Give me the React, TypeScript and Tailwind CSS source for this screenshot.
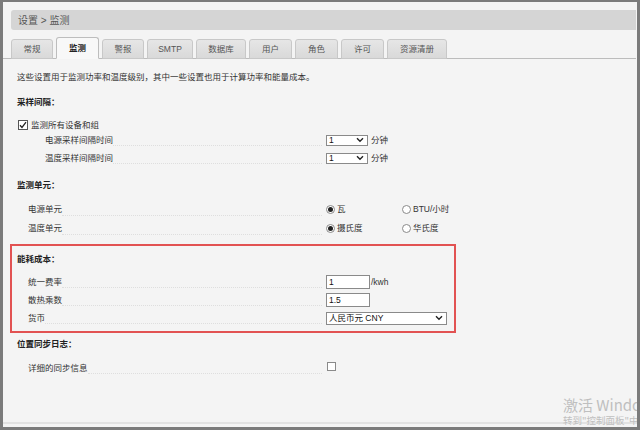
import React from "react";

function Chevron() {
  return (
    <svg width="8" height="6" viewBox="0 0 8 6" className="shrink-0">
      <path d="M1 1.2 L4 4.2 L7 1.2" fill="none" stroke="#222" strokeWidth="1.4" />
    </svg>
  );
}

function Select({ value, wide }: { value: string; wide?: boolean }) {
  return (
    <div
      className={
        wide
          ? "flex h-[13px] w-[121px] items-center justify-between border border-[#8a8a8a] bg-white pl-[2px] pr-[3px] leading-[11px]"
          : "flex h-[11px] w-[42px] items-center justify-between border border-[#8a8a8a] bg-white pl-[2px] pr-[3px] leading-[9px]"
      }
    >
      <span className="text-[#111]">{value}</span>
      <Chevron />
    </div>
  );
}

function TextInput({ value }: { value: string }) {
  return (
    <div className="flex h-[14px] w-[44px] items-center border border-[#8a8a8a] bg-white pl-[2px] leading-[12px] text-[#111]">
      {value}
    </div>
  );
}

function Radio({ checked, label }: { checked?: boolean; label: string }) {
  return (
    <div className="flex items-center gap-[2px]">
      <span className="flex h-[9px] w-[9px] items-center justify-center rounded-full border border-[#8a8a8a] bg-white">
        {checked ? <span className="h-[5px] w-[5px] rounded-full bg-[#222]" /> : null}
      </span>
      <span>{label}</span>
    </div>
  );
}

function Row({
  label,
  deep,
  tall,
  children,
}: {
  label: string;
  deep?: boolean;
  tall?: boolean;
  children?: React.ReactNode;
}) {
  return (
    <div className={tall ? "flex h-[19px] items-center" : "flex h-[18px] items-center"}>
      <div className="flex h-full w-[305px] shrink-0 items-center">
        <span className={deep ? "shrink-0 pl-[28px] text-[#333]" : "shrink-0 pl-[11px] text-[#333]"}>
          {label}
        </span>
        <span className="mb-[3px] flex-1 self-end border-b border-dotted border-[#dedede]" />
      </div>
      <div className="ml-[4px] flex items-center gap-[3px]">{children}</div>
    </div>
  );
}

const tabs = ["常规", "监测", "警报", "SMTP", "数据库", "用户", "角色", "许可", "资源清册"];
const tabW = ["w-[42px]", "w-[43px]", "w-[42px]", "w-[46px]", "w-[50px]", "w-[43px]", "w-[43px]", "w-[43px]", "w-[60px]"];

export default function App() {
  return (
    <div className="h-[430px] w-[640px] overflow-hidden bg-[#7b7b7b] pl-[3px] pr-[3px] pt-[2px] font-['Liberation_Sans','Noto_Sans_CJK_SC',sans-serif] text-[8.5px] text-[#333]">
      <div className="relative flex h-[425px] flex-col overflow-hidden bg-[#f4f4f4]">
        {/* breadcrumb */}
        <div className="ml-[8px] mr-[1px] mt-[8px] flex h-[20px] items-center rounded-l-[3px] bg-[#d5d5d5] pl-[7px] text-[10px] text-[#555]">
          设置 &gt; 监测
        </div>

        {/* tabs */}
        <div className="mr-[1px] mt-[8px] flex h-[21px] items-end gap-[3px] border-b border-[#bcbcbc] pl-[8px]">
          {tabs.map((t, i) =>
            i === 1 ? (
              <div
                key={t}
                className={`${tabW[i]} -mb-px flex h-[22px] items-center justify-center rounded-t-[3px] border border-[#bdbdbd] border-b-[#f8f8f8] bg-[#f8f8f8] font-bold text-[#222]`}
              >
                {t}
              </div>
            ) : (
              <div
                key={t}
                className={`${tabW[i]} -mb-px flex h-[20px] items-center justify-center rounded-t-[3px] border border-[#c8c8c8] bg-gradient-to-b from-[#e6e6e6] to-[#d9d9d9] text-[#555]`}
              >
                {t}
              </div>
            )
          )}
        </div>

        {/* content */}
        <div className="flex-1 pl-[7px]">
          <div className="mt-[12px] h-[12px] pl-[7px] leading-[12px]">
            这些设置用于监测功率和温度级别，其中一些设置也用于计算功率和能量成本。
          </div>

          <div className="pl-[7px]">
            <div className="mt-[13px] h-[12px] font-bold leading-[12px] text-[#222]">采样间隔：</div>
            <div className="mt-[11px] flex h-[12px] items-center gap-[3px] pl-[1px]">
              <span className="flex h-[10px] w-[10px] items-center justify-center border border-[#555] bg-white">
                <svg width="8" height="8" viewBox="0 0 8 8">
                  <path d="M1 4.2 L3 6.4 L7 1.2" fill="none" stroke="#222" strokeWidth="1.3" />
                </svg>
              </span>
              <span>监测所有设备和组</span>
            </div>
            <Row label="电源采样间隔时间" deep>
              <Select value="1" />
              <span>分钟</span>
            </Row>
            <Row label="温度采样间隔时间" deep>
              <Select value="1" />
              <span>分钟</span>
            </Row>

            <div className="mt-[12px] h-[12px] font-bold leading-[12px] text-[#222]">监测单元：</div>
            <div className="mt-[9px]">
              <Row label="电源单元" tall>
                <div className="w-[73px]">
                  <Radio checked label="瓦" />
                </div>
                <Radio label="BTU/小时" />
              </Row>
              <Row label="温度单元" tall>
                <div className="w-[73px]">
                  <Radio checked label="摄氏度" />
                </div>
                <Radio label="华氏度" />
              </Row>
            </div>
          </div>

          {/* highlighted box */}
          <div className="mt-[6px] w-[446px] border-2 border-[#e25252] pb-[4px] pl-[5px]">
            <div className="mt-[7px] h-[12px] font-bold leading-[12px] text-[#222]">能耗成本：</div>
            <div className="mt-[8px]">
              <Row label="统一费率">
                <TextInput value="1" />
                <span className="-ml-[2px]">/kwh</span>
              </Row>
              <Row label="散热乘数">
                <TextInput value="1.5" />
              </Row>
              <Row label="货币">
                <Select value="人民币元 CNY" wide />
              </Row>
            </div>
          </div>

          <div className="pl-[7px]">
            <div className="mt-[5px] h-[12px] font-bold leading-[12px] text-[#222]">位置同步日志：</div>
            <div className="mt-[9px]">
              <Row label="详细的同步信息">
                <span className="-mt-[4px] ml-[1px] h-[9px] w-[9px] border border-[#8a8a8a] bg-white" />
              </Row>
            </div>
          </div>
        </div>

        <div className="h-[2px] bg-[#e2e2e2]" />
        <div className="h-[3px]" />

        {/* windows activation watermark */}
        <div className="pointer-events-none absolute left-[560px] top-[394px] whitespace-nowrap text-[#bfbfbf]">
          <div className="h-[17px] font-['Noto_Sans_CJK_SC',sans-serif] text-[15px] leading-[17px]">激活 Windows</div>
          <div className="mt-[2px] h-[11px] font-['Noto_Sans_CJK_SC',sans-serif] text-[9.5px] leading-[11px]">转到"控制面板"中以激活 Windows。</div>
        </div>
      </div>
    </div>
  );
}
